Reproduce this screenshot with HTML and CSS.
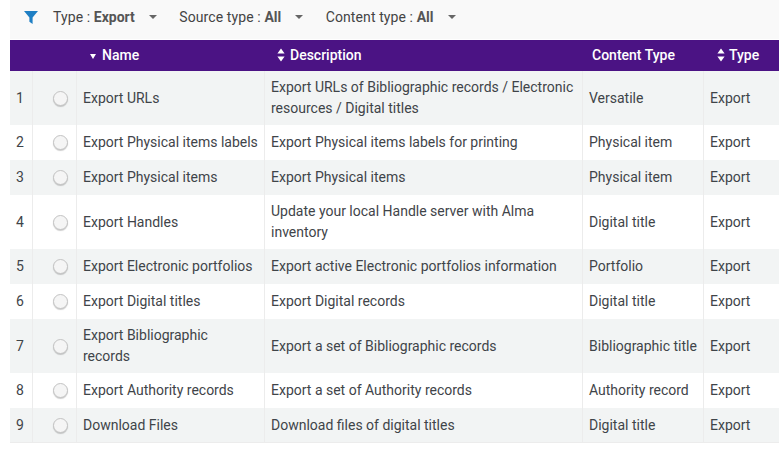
FILE: index.html
```html
<!DOCTYPE html>
<html lang="en">
  <head>
    <meta charset="UTF-8" />
    <meta name="viewport" content="width=device-width, initial-scale=1.0" />
    <title>Export jobs</title>
    <link rel="stylesheet" href="styles.css">
  </head>
  <body>
    <div class="filter-bar">
      <svg class="filter-icon" width="14" height="13" viewBox="0 0 14 13"><path d="M0 0h14L8.6 6.4V13L5.4 10.8V6.4z" /></svg>
      <div class="filter"><span class="filter-label">Type : </span><b>Export</b><span class="caret"></span></div>
      <div class="filter"><span class="filter-label">Source type : </span><b>All</b><span class="caret"></span></div>
      <div class="filter"><span class="filter-label">Content type : </span><b>All</b><span class="caret"></span></div>
    </div>

    <table class="jobs">
      <colgroup>
        <col class="col-num" />
        <col class="col-radio" />
        <col class="col-name" />
        <col class="col-desc" />
        <col class="col-content" />
        <col class="col-type" />
      </colgroup>
      <thead>
        <tr>
          <th></th>
          <th></th>
          <th class="name-head"><span class="sort-down"></span>Name</th>
          <th class="desc-head"><svg class="sort-both" width="8" height="14" viewBox="0 0 8 14"><path d="M4 0.5L7.6 5.5H0.4zM4 13.5L0.4 8.5H7.6z" /></svg>Description</th>
          <th class="content-head">Content Type</th>
          <th class="type-head"><svg class="sort-both" width="8" height="14" viewBox="0 0 8 14"><path d="M4 0.5L7.6 5.5H0.4zM4 13.5L0.4 8.5H7.6z" /></svg>Type</th>
        </tr>
      </thead>
      <tbody>
        <tr class="tall">
          <td>1</td><td><span class="radio"></span></td>
          <td>Export URLs</td>
          <td>Export URLs of Bibliographic records / Electronic resources / Digital titles</td>
          <td>Versatile</td><td>Export</td>
        </tr>
        <tr>
          <td>2</td><td><span class="radio"></span></td>
          <td>Export Physical items labels</td>
          <td>Export Physical items labels for printing</td>
          <td>Physical item</td><td>Export</td>
        </tr>
        <tr>
          <td>3</td><td><span class="radio"></span></td>
          <td>Export Physical items</td>
          <td>Export Physical items</td>
          <td>Physical item</td><td>Export</td>
        </tr>
        <tr class="tall">
          <td>4</td><td><span class="radio"></span></td>
          <td>Export Handles</td>
          <td>Update your local Handle server with Alma inventory</td>
          <td>Digital title</td><td>Export</td>
        </tr>
        <tr>
          <td>5</td><td><span class="radio"></span></td>
          <td>Export Electronic portfolios</td>
          <td>Export active Electronic portfolios information</td>
          <td>Portfolio</td><td>Export</td>
        </tr>
        <tr>
          <td>6</td><td><span class="radio"></span></td>
          <td>Export Digital titles</td>
          <td>Export Digital records</td>
          <td>Digital title</td><td>Export</td>
        </tr>
        <tr class="tall">
          <td>7</td><td><span class="radio"></span></td>
          <td>Export Bibliographic records</td>
          <td>Export a set of Bibliographic records</td>
          <td>Bibliographic title</td><td>Export</td>
        </tr>
        <tr>
          <td>8</td><td><span class="radio"></span></td>
          <td>Export Authority records</td>
          <td>Export a set of Authority records</td>
          <td>Authority record</td><td>Export</td>
        </tr>
        <tr>
          <td>9</td><td><span class="radio"></span></td>
          <td>Download Files</td>
          <td>Download files of digital titles</td>
          <td>Digital title</td><td>Export</td>
        </tr>
      </tbody>
    </table>
  </body>
</html>
```

FILE: styles.css
```css
body {
  margin: 0;
  font-family: Roboto, "Liberation Sans", sans-serif;
  font-size: 14px;
  color: #3a3a3a;
  background-color: #fff;
  overflow: hidden;
}

/* Filter bar */
.filter-bar {
  display: flex;
  align-items: center;
  height: 39px;
  margin: 0 0 1px 10px;
  padding: 0 0 5px 14px;
  box-sizing: border-box;
  background-color: #f9f9f9;
}

.filter-icon {
  fill: #1f7fc4;
  margin-right: 15px;
}

.filter {
  display: flex;
  align-items: center;
  margin-right: 22.5px;
  white-space: pre;
  color: #444;
}

.filter-label {
  letter-spacing: 0.1px;
}

.filter b {
  font-weight: 700;
  color: #555;
}

.caret {
  width: 0;
  height: 0;
  margin-left: 14px;
  border-left: 4px solid transparent;
  border-right: 4px solid transparent;
  border-top: 4px solid #666;
}

/* Table */
.jobs {
  width: 769px;
  margin-left: 10px;
  table-layout: fixed;
  border-collapse: separate;
  border-spacing: 0;
}

.col-num { width: 23px; }
.col-radio { width: 44px; }
.col-name { width: 188px; }
.col-desc { width: 318px; }
.col-content { width: 121px; }
.col-type { width: 75px; }

.jobs th {
  height: 31px;
  padding: 0 0 2px 6px;
  box-sizing: border-box;
  text-align: left;
  font-weight: 500;
  color: #fff;
  background-color: #4b1384;
}

.jobs th.name-head {
  padding-left: 13px;
}

.jobs th.desc-head {
  padding-left: 12px;
}

.jobs th.content-head {
  padding-left: 9px;
}

.jobs th.type-head {
  padding-left: 13px;
}

.jobs td {
  height: 35px;
  padding: 0 6px;
  line-height: 21px;
  box-sizing: border-box;
  border-right: 1px solid #ececec;
  color: #3f4449;
}

.jobs td:last-child {
  border-right: none;
}

.jobs tr.tall td {
  height: 54px;
}

.jobs tbody tr:nth-child(odd) td {
  background-color: #f2f4f4;
}

.jobs tbody tr:last-child td {
  border-bottom: 1px solid #ececec;
}

.sort-down {
  display: inline-block;
  width: 0;
  height: 0;
  margin-right: 6px;
  vertical-align: 1px;
  border-left: 3.5px solid transparent;
  border-right: 3.5px solid transparent;
  border-top: 5px solid #fff;
}

.sort-both {
  margin-right: 5px;
  vertical-align: -2px;
  fill: #fff;
}

.type-head .sort-both {
  margin-right: 4px;
}

.radio {
  display: block;
  width: 15px;
  height: 15px;
  margin-left: 14px;
  box-sizing: border-box;
  border: 1px solid #c4c4c4;
  border-radius: 50%;
  background-color: #f5f5f5;
  box-shadow: 0 1px 1px rgba(0, 0, 0, 0.2);
}
```
